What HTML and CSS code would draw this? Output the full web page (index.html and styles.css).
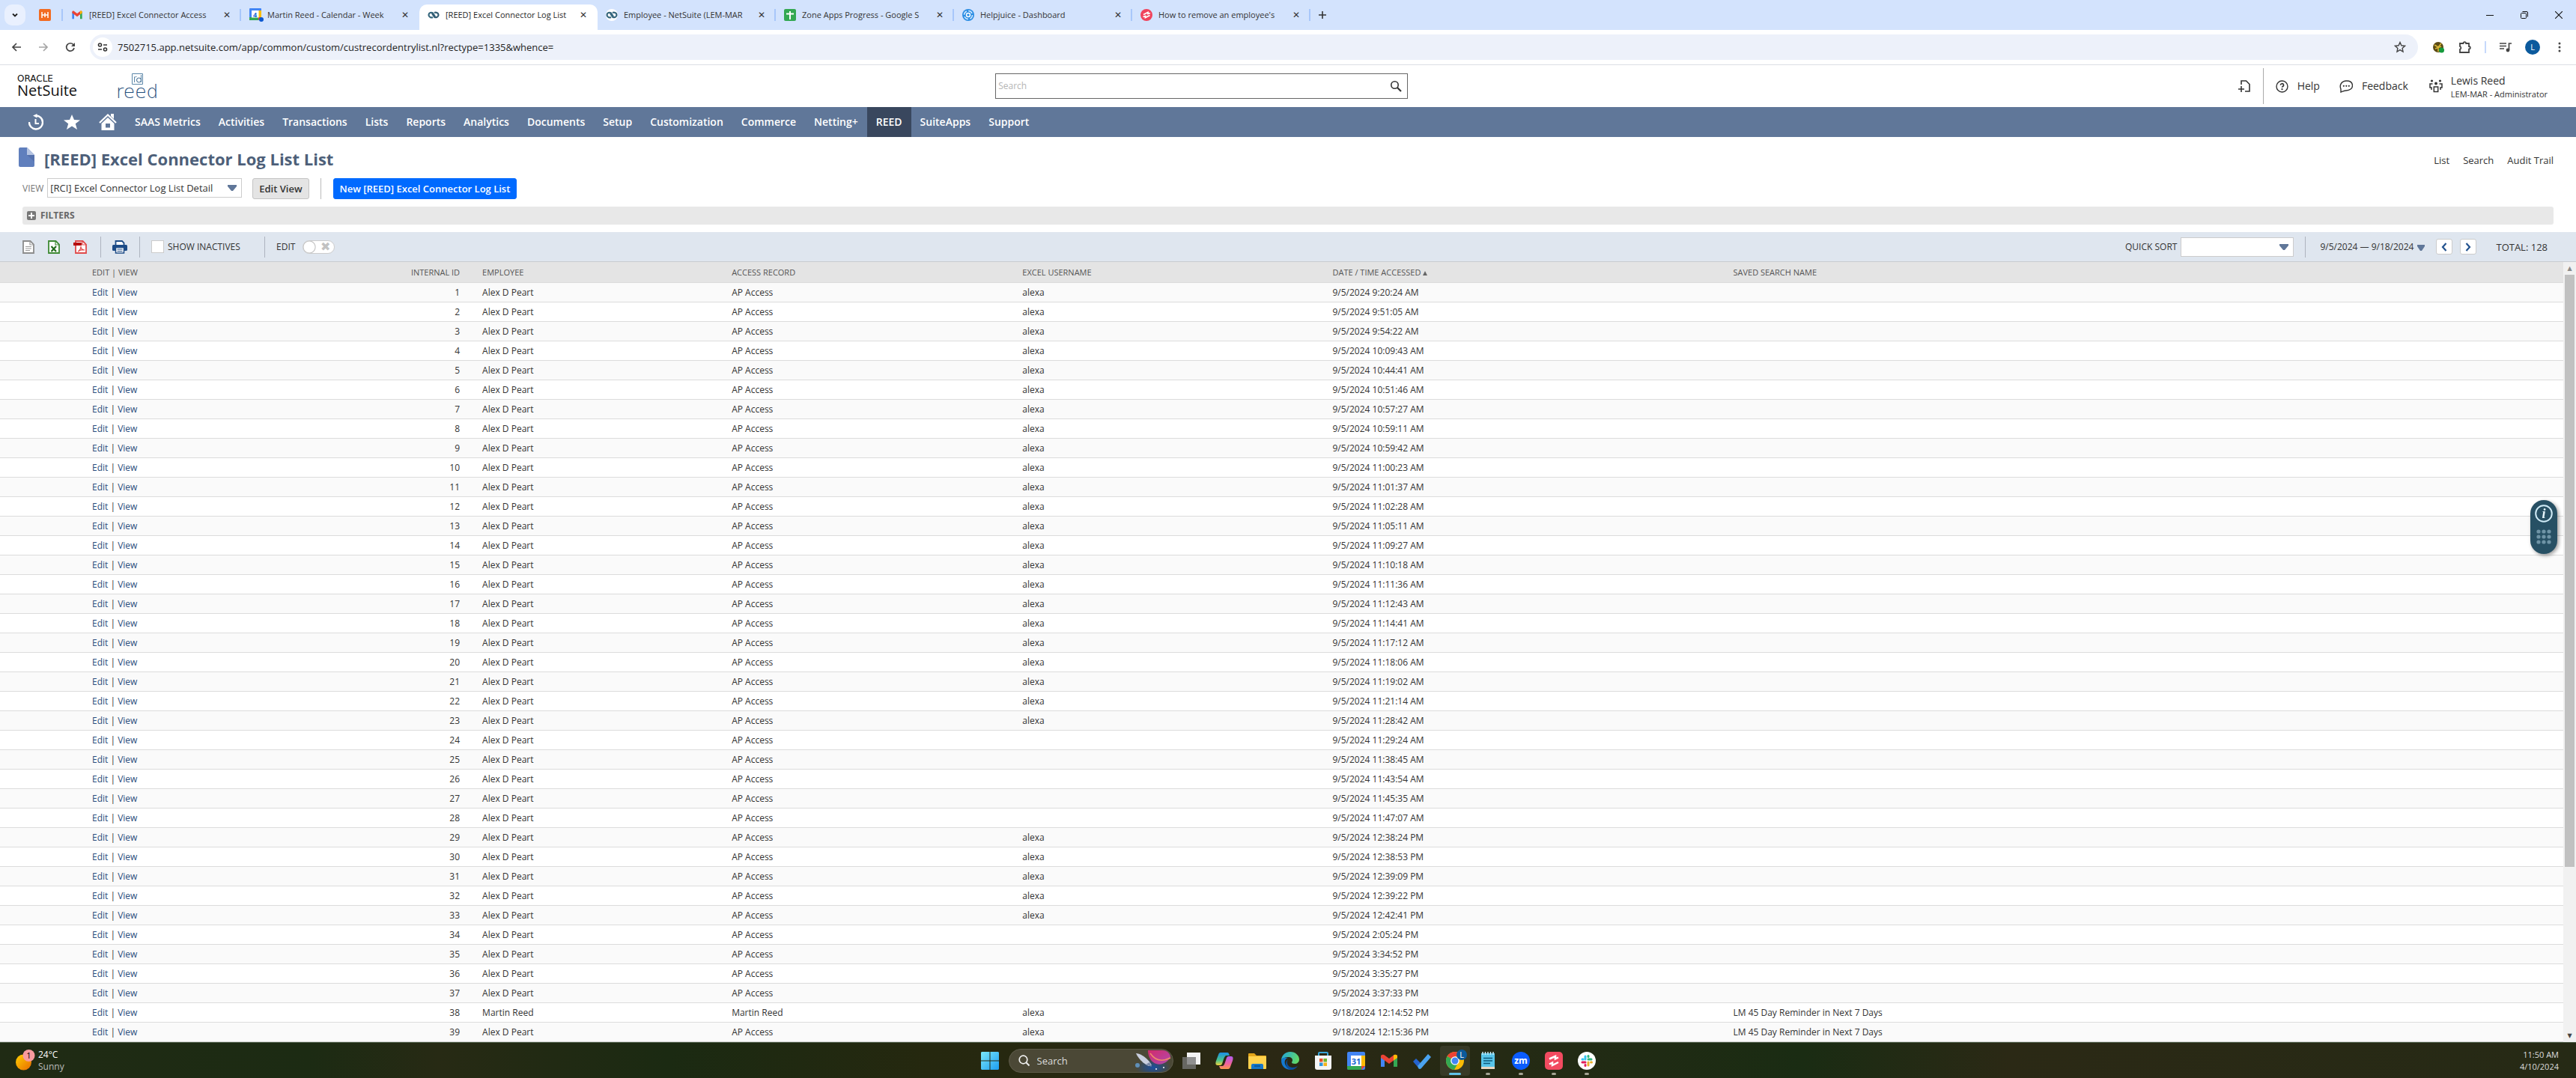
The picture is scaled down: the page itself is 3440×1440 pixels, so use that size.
FILE: index.html
```html
<!DOCTYPE html>
<html lang="en">
<head>
<meta charset="utf-8">
<title>[REED] Excel Connector Log List List</title>
<link rel="stylesheet" href="styles.css">
</head>
<body>

<div class="tabstrip">
  <button class="tab-search" aria-label="Search tabs"><svg width="10" height="10" viewBox="0 0 10 10"><path d="M2 3.500L5 6.500L8 3.500" fill="none" stroke="#1f1f1f" stroke-width="1.800"/></svg></button>
  <div class="tabs">
    <a href="#" class="tab pinned" aria-label="Pinned tab"><svg width="16" height="16" viewBox="0 0 16 16"><rect width="16" height="16" rx="2" fill="#f26b21"/><path d="M4 4v8M12 4v8M4 8h8M8 5v6" stroke="#fff" stroke-width="1.500"/></svg></a>
    <div class="tab"><svg width="16" height="16" viewBox="0 0 24 24"><path d="M2 20V6l4 3v11z" fill="#4285f4"/><path d="M18 20V9l4-3v14z" fill="#34a853"/><path d="M2 6c0-2 2-3 4-1.500L12 9l6-4.500C20 3 22 4 22 6v2l-10 7.500L2 8z" fill="#ea4335"/><path d="M18 4.500C20 3 22 4 22 6v2l-4 3z" fill="#fbbc04"/></svg><a href="#" class="tab-title">[REED] Excel Connector Access</a><button class="close" aria-label="Close tab">✕</button></div>
    <div class="tab"><svg width="20" height="18" viewBox="0 0 20 18"><rect width="16" height="16" rx="1" fill="#4285f4"/><path d="M0 12h12v4H0z" fill="#34a853"/><path d="M12 3h4v9h-4z" fill="#fbbc04"/><path d="M12 12h4l-4 4z" fill="#ea4335"/><rect x="3" y="3" width="9.500" height="9.500" fill="#fff"/><text x="5" y="11.500" class="cal-num">4</text><circle cx="16" cy="15" r="3" fill="#0b57d0"/></svg><a href="#" class="tab-title cal">Martin Reed - Calendar - Week</a><button class="close" aria-label="Close tab">✕</button></div>
    <div class="tab active"><svg width="16" height="16" viewBox="0 0 16 16"><g fill="none" stroke="#36677d" stroke-width="2.200"><path d="M7 11C5 12 1.500 11 1.500 8S5 4 7 5.500L10 10"/><path d="M9 5c2-1 5.500 0 5.500 3S11 12 9 10.500L6 6" stroke="#325c72"/></g></svg><a href="#" class="tab-title">[REED] Excel Connector Log List</a><button class="close" aria-label="Close tab">✕</button></div>
    <div class="tab after"><svg width="16" height="16" viewBox="0 0 16 16"><circle cx="8" cy="8" r="8" fill="#fff"/><g fill="none" stroke="#36677d" stroke-width="2.200"><path d="M7 11C5 12 1.500 11 1.500 8S5 4 7 5.500L10 10"/><path d="M9 5c2-1 5.500 0 5.500 3S11 12 9 10.500L6 6"/></g></svg><a href="#" class="tab-title">Employee - NetSuite (LEM-MAR</a><button class="close" aria-label="Close tab">✕</button></div>
    <div class="tab"><svg width="16" height="16" viewBox="0 0 16 16"><rect width="16" height="16" rx="2" fill="#34a853"/><path d="M8 3v11M3 6.500h10" stroke="#fff" stroke-width="2"/></svg><a href="#" class="tab-title">Zone Apps Progress - Google S</a><button class="close" aria-label="Close tab">✕</button></div>
    <div class="tab"><svg width="16" height="16" viewBox="0 0 16 16"><circle cx="8" cy="8" r="8" fill="#2b8de3"/><circle cx="8" cy="8" r="5.500" fill="none" stroke="#cfe8ff" stroke-width="1.500" stroke-dasharray="6 2.500"/><circle cx="8" cy="8" r="2.500" fill="none" stroke="#fff" stroke-width="1.500"/></svg><a href="#" class="tab-title">Helpjuice - Dashboard</a><button class="close" aria-label="Close tab">✕</button></div>
    <div class="tab last"><svg width="16" height="16" viewBox="0 0 16 16"><circle cx="8" cy="8" r="8" fill="#f0435c"/><path d="M4 7.500l6-3v2l3-1M3.500 10.500l3-1v2l6-3" fill="none" stroke="#fff" stroke-width="1.800"/></svg><a href="#" class="tab-title">How to remove an employee's</a><button class="close" aria-label="Close tab">✕</button></div>
  </div>
  <button class="new-tab" aria-label="New tab"><svg width="12" height="12" viewBox="0 0 12 12"><path d="M6 1v10M1 6h10" stroke="#333" stroke-width="1.600"/></svg></button>
  <div class="window-controls">
    <button aria-label="Minimize"><svg width="10" height="10" viewBox="0 0 10 10"><path d="M0 5.500h10" stroke="#111"/></svg></button>
    <button aria-label="Restore"><svg width="10" height="10" viewBox="0 0 10 10"><rect x=".5" y="2.500" width="7" height="7" rx="1" fill="none" stroke="#111"/><path d="M2.500 .5H8A1.500 1.500 0 0 1 9.500 2v5.500" fill="none" stroke="#111"/></svg></button>
    <button aria-label="Close window"><svg width="10" height="10" viewBox="0 0 10 10"><path d="M0 0l10 10M10 0L0 10" stroke="#111" stroke-width="1.100"/></svg></button>
  </div>
</div>

<div class="browser-bar">
  <div class="history">
    <button aria-label="Back"><svg width="14" height="14" viewBox="0 0 14 14"><path d="M13 7H2M7 2L2 7l5 5" fill="none" stroke="#444" stroke-width="1.700"/></svg></button>
    <button aria-label="Forward"><svg width="14" height="14" viewBox="0 0 14 14"><path d="M1 7h11M7 2l5 5-5 5" fill="none" stroke="#a5a5a5" stroke-width="1.700"/></svg></button>
    <button aria-label="Reload"><svg width="14" height="14" viewBox="0 0 14 14"><path d="M12 8A5.200 5.200 0 1 1 10.800 3.500L12.500 5" fill="none" stroke="#444" stroke-width="1.700"/><path d="M13 1v5H8z" fill="#444"/></svg></button>
  </div>
  <div class="omnibox">
    <span class="site-info"><svg width="14" height="12" viewBox="0 0 14 12" fill="none" stroke="#333" stroke-width="1.600"><circle cx="3.500" cy="3" r="2"/><path d="M8 3h5M1 9h5"/><circle cx="10.500" cy="9" r="2"/></svg></span>
    <input class="url" aria-label="Address" value="7502715.app.netsuite.com/app/common/custom/custrecordentrylist.nl?rectype=1335&amp;whence=">
    <button aria-label="Bookmark this page"><svg width="16" height="16" viewBox="0 0 16 16"><path d="M8 1.500l1.900 4.300 4.600.5-3.400 3.100.9 4.600L8 11.600 4 14l.9-4.600L1.500 6.300l4.600-.5z" fill="none" stroke="#444" stroke-width="1.400"/></svg></button>
  </div>
  <div class="extensions">
    <button class="ext" aria-label="Extension"><svg width="16" height="16" viewBox="0 0 16 16"><circle cx="7" cy="8" r="7" fill="#5b4a14"/><path d="M2 5l5 3 4-5M7 8v6M3 10l8-3" stroke="#d9b93a" stroke-width="1.500" fill="none"/><circle cx="11.500" cy="12" r="3.500" fill="#159a3c"/></svg></button>
    <button class="puzzle" aria-label="Extensions"><svg width="18" height="18" viewBox="0 0 18 18"><path d="M2 4h4.500a1.800 1.800 0 0 1 3.600 0H14v4a1.800 1.800 0 0 1 0 3.600V16H2v-4.200a2 2 0 0 0 0-3.800z" fill="none" stroke="#444" stroke-width="1.800"/></svg></button>
    <i class="rule"></i>
    <button class="media" aria-label="Media controls"><svg width="16" height="14" viewBox="0 0 16 14"><path d="M0 2h9M0 5.500h9M0 9h6M12.500 11V2H16" fill="none" stroke="#444" stroke-width="1.700"/><circle cx="11" cy="11" r="2.400" fill="#444"/></svg></button>
    <button class="avatar" aria-label="Profile">L</button>
    <button class="more" aria-label="Menu"><svg width="4" height="14" viewBox="0 0 4 14" fill="#444"><circle cx="2" cy="2" r="1.500"/><circle cx="2" cy="7" r="1.500"/><circle cx="2" cy="12" r="1.500"/></svg></button>
  </div>
</div>

<header class="app-header">
  <div class="logos">
    <a href="#" class="netsuite"><span class="oracle">ORACLE</span><span>NetSuite</span></a>
    <a href="#" class="reed"><svg width="15" height="15" viewBox="0 0 15 15"><path d="M.5 14.500V.5h14v14zM3.500 12V4.500M3.500 6.500c0-1.500 1-2 3-2M12.500 2v10" fill="none" stroke="#5b86a8"/><circle cx="9.500" cy="9" r="3" fill="none" stroke="#38678f"/></svg><span>reed</span></a>
  </div>
  <form class="global-search"><input type="text" placeholder="Search" aria-label="Search"><button type="button" aria-label="Search"><svg width="16" height="16" viewBox="0 0 16 16"><circle cx="6.500" cy="6.500" r="4.700" fill="none" stroke="#333" stroke-width="1.600"/><path d="M10 10l5 5" stroke="#333" stroke-width="2.200"/></svg></button></form>
  <div class="account">
    <button class="create" aria-label="Create new"><svg width="16" height="16" viewBox="0 0 16 16" fill="none" stroke="#333" stroke-width="1.600"><path d="M4 6V1h6.500L15 5.500V15H9M0 12h8M4 8v8"/></svg></button>
    <i class="rule"></i>
    <a href="#"><svg width="17" height="17" viewBox="0 0 17 17"><circle cx="8.500" cy="8.500" r="7.500" fill="none" stroke="#333" stroke-width="1.400"/><path d="M6.500 6.800a2 2 0 1 1 3 1.600c-.7.500-1 .7-1 1.400" fill="none" stroke="#333" stroke-width="1.700"/><circle cx="8.500" cy="12.200" r="1.100" fill="#333"/></svg>Help</a>
    <a href="#" class="feedback"><svg width="18" height="17" viewBox="0 0 18 17"><path d="M2 16v-4C-.5 6 3.500 1 9.500 1S17.500 4 17.500 7.500 14 14 9 14c-2 0-4 1-7 2z" fill="none" stroke="#333" stroke-width="1.400"/><g fill="#333"><circle cx="5.800" cy="7.800" r="1.100"/><circle cx="9.300" cy="7.800" r="1.100"/><circle cx="12.800" cy="7.800" r="1.100"/></g></svg>Feedback</a>
    <a href="#" class="role"><svg width="18" height="18" viewBox="0 0 18 18"><g fill="#333"><circle cx="3.500" cy="2" r="1.600"/><circle cx="14.500" cy="2" r="1.600"/><circle cx="9" cy="5.500" r="1.900"/></g><path d="M4.500 6H1v5h2v3M13.500 6H17v5h-2v3M6.300 10h5.400v6.500H6.300z" fill="none" stroke="#333" stroke-width="1.500"/></svg><span class="who"><span class="name">Lewis Reed</span><span class="org">LEM-MAR - Administrator</span></span></a>
  </div>
</header>

<nav class="main-nav">
  <a href="#" class="icon" aria-label="Recent records"><svg width="20" height="22" viewBox="0 0 20 22"><path d="M1 11a9 9 0 1 0 9-8.500" fill="none" stroke="#fff" stroke-width="2.400"/><path d="M6 2.500L11.500 0v5.500z" fill="#fff"/><path d="M9.500 7v6H14" fill="none" stroke="#fff" stroke-width="2"/></svg></a>
  <a href="#" class="icon" aria-label="Shortcuts"><svg width="22" height="20" viewBox="0 0 22 20"><path d="M11 0l3 7 8 .5-6.200 4.700L18 20l-7-4.500L4 20l2.200-7.800L0 7.500 8 7z" fill="#fff"/></svg></a>
  <a href="#" class="icon" aria-label="Home"><svg width="24" height="22" viewBox="0 0 24 22"><path d="M1 12L12 1.500 23 12" fill="none" stroke="#fff" stroke-width="2.200"/><path d="M16 0h4v7l-4-4z" fill="#fff"/><path d="M12 5l8.500 8v9h-17v-9z" fill="#fff"/><rect x="9" y="13" width="6" height="5.500" fill="#607799"/></svg></a>
  <a href="#">SAAS Metrics</a><a href="#">Activities</a><a href="#">Transactions</a><a href="#">Lists</a><a href="#">Reports</a><a href="#">Analytics</a><a href="#">Documents</a><a href="#">Setup</a><a href="#">Customization</a><a href="#">Commerce</a><a href="#">Netting+</a><a href="#" class="current">REED</a><a href="#">SuiteApps</a><a href="#">Support</a>
</nav>

<main class="page">
  <div class="title-row">
    <svg width="21" height="26" viewBox="0 0 21 26"><path d="M2 0h9l10 10v14a2 2 0 0 1-2 2H2a2 2 0 0 1-2-2V2a2 2 0 0 1 2-2z" fill="#607fbd"/><path d="M11 0l10 10H11z" fill="#b5c4e2"/><path d="M11 10h10v9z" fill="#5672ad"/></svg>
    <h1>[REED] Excel Connector Log List List</h1>
    <div class="page-links"><a href="#">List</a><a href="#">Search</a><a href="#">Audit Trail</a></div>
  </div>
  <div class="view-row">
    <label for="view">VIEW</label>
    <select id="view" class="view-select"><option>[RCI] Excel Connector Log List Detail</option></select>
    <button class="btn">Edit View</button>
    <i class="rule"></i>
    <button class="btn primary">New [REED] Excel Connector Log List</button>
  </div>
  <button class="filters"><svg width="12" height="12" viewBox="0 0 12 12"><rect width="12" height="12" rx="2" fill="#777"/><path d="M6 2v8M2 6h8" stroke="#fff" stroke-width="2"/></svg>FILTERS</button>

  <div class="list-bar">
    <div class="exports">
      <button aria-label="Export CSV"><svg width="16" height="18" viewBox="0 0 16 18"><path d="M1 1h9.500L15 5.500V17H1z" fill="#fff" stroke="#8c8c8c" stroke-width="1.800"/><path d="M10 1v5h5M4 8.500h8M4 11h8M4 13.500h6" fill="none" stroke="#9b9b9b" stroke-width="1.200"/></svg></button>
      <button aria-label="Export Excel"><svg width="16" height="18" viewBox="0 0 16 18"><path d="M1 1h9.500L15 5.500V17H1z" fill="#fff" stroke="#3e8a34" stroke-width="1.800"/><path d="M10 1v5h5" fill="none" stroke="#3e8a34" stroke-width="1.200"/><path d="M4.500 8l6.500 7M11 8l-6.500 7" stroke="#226b1c" stroke-width="2.200"/></svg></button>
      <button aria-label="Export PDF"><svg width="18" height="18" viewBox="0 0 18 18"><path d="M3 1h9.500L17 5.500V17H3z" fill="#fff" stroke="#e04a4a" stroke-width="1.800"/><path d="M12 1v5h5M6 15c3-2 4-5 4-7 0 3 2 5 5 5-3-1-6 0-9 2z" fill="none" stroke="#e04a4a" stroke-width="1.200"/><path d="M0 3h11v4H0z" fill="#b50d0d"/></svg></button>
    </div>
    <i class="rule"></i>
    <button class="print" aria-label="Print"><svg width="20" height="18" viewBox="0 0 20 18"><path d="M4.500 6V1h8.500l2.500 2.500V6" fill="#fff" stroke="#1c4b87" stroke-width="1.800"/><rect y="6" width="20" height="8" rx="1.500" fill="#1c4b87"/><path d="M4.500 9.500h11V17h-11z" fill="#fff" stroke="#1c4b87" stroke-width="1.500"/><path d="M6.500 12h7M6.500 14.500h7" stroke="#1c4b87"/></svg></button>
    <i class="rule"></i>
    <label class="inactives"><input type="checkbox">SHOW INACTIVES</label>
    <i class="rule"></i>
    <label class="inline-edit">EDIT<input type="checkbox" class="toggle" aria-label="Edit"></label>
    <div class="list-tools">
      <label for="sort">QUICK SORT</label>
      <select id="sort" class="sort-select"><option></option></select>
      <i class="rule"></i>
      <button class="range">9/5/2024 — 9/18/2024<svg width="10" height="8" viewBox="0 0 10 8"><path d="M0 0h10v2L6 8H4L0 2z" fill="#607799"/></svg></button>
      <button class="step" aria-label="Previous"><svg width="8" height="12" viewBox="0 0 8 12"><path d="M6.500 1L2 6l4.500 5" fill="none" stroke="#24538f" stroke-width="2.200"/></svg></button>
      <button class="step" aria-label="Next"><svg width="8" height="12" viewBox="0 0 8 12"><path d="M1.500 1L6 6l-4.500 5" fill="none" stroke="#24538f" stroke-width="2.200"/></svg></button>
      <span class="total">TOTAL: 128</span>
    </div>
  </div>

  <div class="list">
    <div class="list-body">
      <table>
        <thead><tr><th class="c-edit">EDIT | VIEW</th><th class="c-id">INTERNAL ID</th><th class="c-emp">EMPLOYEE</th><th class="c-rec">ACCESS RECORD</th><th class="c-user">EXCEL USERNAME</th><th class="c-date">DATE / TIME ACCESSED<svg width="6" height="6" viewBox="0 0 6 6"><path d="M3 0l3 6H0z" fill="#666"/></svg></th><th>SAVED SEARCH NAME</th></tr></thead>
        <tbody id="rows"></tbody>
      </table>
    </div>
    <div class="scrollbar"><span class="arrow">▲</span><span class="track"><span class="thumb"></span></span><span class="arrow down">▼</span></div>
  </div>
</main>

<div class="helper">
  <button aria-label="Information"><svg width="24" height="24" viewBox="0 0 24 24"><circle cx="12" cy="12" r="10.800" fill="none" stroke="#cfeaf6" stroke-width="2"/><text x="12" y="18" text-anchor="middle" class="info-i">i</text></svg></button>
  <button aria-label="Move"><svg width="20" height="20" viewBox="0 0 20 20" fill="#6f94a6"><circle cx="3" cy="3" r="2.600"/><circle cx="10" cy="3" r="2.600"/><circle cx="17" cy="3" r="2.600"/><circle cx="3" cy="10" r="2.600"/><circle cx="10" cy="10" r="2.600"/><circle cx="17" cy="10" r="2.600"/><circle cx="3" cy="17" r="2.600"/><circle cx="10" cy="17" r="2.600"/><circle cx="17" cy="17" r="2.600"/></svg></button>
</div>

<footer class="taskbar">
  <div class="weather"><svg width="28" height="30" viewBox="0 0 28 30"><defs><linearGradient id="sun" x1="0" y1="0" x2="1" y2="1"><stop offset="0" stop-color="#ffd000"/><stop offset="1" stop-color="#e86a00"/></linearGradient></defs><circle cx="10.500" cy="18" r="10.500" fill="url(#sun)"/><circle cx="17.500" cy="9" r="8" fill="#f79a9e"/><text x="17.500" y="13" text-anchor="middle" class="badge-num">1</text></svg><div>24°C<br><span class="dim">Sunny</span></div></div>
  <div class="apps">
    <button class="start" aria-label="Start"><svg width="24" height="24" viewBox="0 0 24 24"><defs><linearGradient id="win" x1="0" y1="0" x2="1" y2="1"><stop offset="0" stop-color="#7be8fb"/><stop offset="1" stop-color="#1c9cf0"/></linearGradient></defs><path d="M1 0h10.500v11.500H0V1zM12.500 0H23l1 1v10.500H12.500zM0 12.500h11.500V24H1l-1-1zM12.500 12.500H24V23l-1 1H12.500z" fill="url(#win)"/></svg></button>
    <label class="task-search"><svg width="16" height="16" viewBox="0 0 16 16"><circle cx="6.500" cy="6.500" r="5.300" fill="none" stroke="#eee" stroke-width="1.700"/><path d="M10.500 10.500l4 4" stroke="#eee" stroke-width="2"/></svg><input type="text" placeholder="Search" aria-label="Search"><svg width="52" height="32" viewBox="0 0 52 32"><defs><radialGradient id="space"><stop offset="0" stop-color="#1b4fa0"/><stop offset="1" stop-color="#1b4fa0" stop-opacity="0"/></radialGradient><linearGradient id="planet" x1="0" y1="0" x2="1" y2="1"><stop offset="0" stop-color="#d22a6a"/><stop offset="1" stop-color="#b04bb0"/></linearGradient></defs><ellipse cx="26" cy="25" rx="24" ry="12" fill="url(#space)"/><path d="M19 2h19c7 0 11 5 11 9-4 8-15 13-23 7-5-4-7-10-7-16z" fill="url(#planet)"/><path d="M22 6c6 9 15 12 27 6" fill="none" stroke="#f08a6a" stroke-width="1.500"/><path d="M3 6c5 0 16 6 21 16l-4 1C13 20 6 13 3 6z" fill="#c9cede"/><circle cx="5" cy="22" r="3" fill="#5f8fb8"/><path d="M16 21l5-3 3 6z" fill="#7c89a8"/><circle cx="30" cy="27" r="1" fill="#fff"/><circle cx="40" cy="25" r="1" fill="#fff"/></svg></label>
    <button aria-label="Task view"><svg width="24" height="24" viewBox="0 0 24 24"><rect x="6" y="1" width="18" height="16" fill="#f3f3f3"/><rect x="0" y="7" width="18" height="16" fill="#777" fill-opacity=".8"/></svg></button>
    <button aria-label="Copilot"><svg width="24" height="24" viewBox="0 0 24 24"><defs><linearGradient id="co1" x1="0" y1="0" x2="0" y2="1"><stop offset="0" stop-color="#1a8fe8"/><stop offset=".6" stop-color="#49c38b"/><stop offset="1" stop-color="#f2d13c"/></linearGradient><linearGradient id="co2" x1="0" y1="0" x2="0" y2="1"><stop offset="0" stop-color="#b35bf0"/><stop offset=".6" stop-color="#f0639a"/><stop offset="1" stop-color="#f7984a"/></linearGradient></defs><path d="M7 1h9c2 0 2 2 3 4h-4c-2 0-3 2-4 5l-2 6c-1 2-2 2-4 2H3c-3 0-3-3-2-6L4 4c.500-2 1.500-3 3-3z" fill="url(#co1)"/><path d="M17 23H8c-2 0-2-2-3-4h4c2 0 3-2 4-5l2-6c1-2 2-2 4-2h2c3 0 3 3 2 6l-3 8c-.500 2-1.500 3-3 3z" fill="url(#co2)"/></svg></button>
    <button aria-label="File Explorer"><svg width="24" height="24" viewBox="0 0 24 24"><path d="M0 3q0-1 1-1h7l3 3h12q1 0 1 1v6H0z" fill="#e2a51a"/><rect y="6" width="24" height="17" rx="1" fill="#ffd24d"/><path d="M4 23v-5q0-2 2-2h12q2 0 2 2v5z" fill="#1777c9"/><path d="M8 19h8" stroke="#0b4f8c" stroke-width="1.500"/></svg></button>
    <button aria-label="Edge"><svg width="24" height="24" viewBox="0 0 24 24"><defs><linearGradient id="ed" x1="0" y1="0" x2="1" y2=".3"><stop offset="0" stop-color="#1ea4e0"/><stop offset="1" stop-color="#5fd66b"/></linearGradient></defs><path d="M0 12C0 5 5 0 12 0s12 5 12 10c0 4-3 6-6 6s-4-1-4-2 1-1 1-3-2-4-5-4C5 7 0 9 0 12z" fill="url(#ed)"/><path d="M0 12c0-4 5-5 9-4-4 1-5 5-4 8 1 4 5 7 9 7.500C6 25 0 19 0 12z" fill="#1479cf"/><path d="M9 10c-3 5 0 11 6 11 3 0 5-1 7-2-3 5-8 5.500-11 4.500-5-2-7-9-2-13.500z" fill="#0c4f9c"/></svg></button>
    <button aria-label="Store"><svg width="24" height="24" viewBox="0 0 24 24"><path d="M6 6V2q0-1 1-1h10q1 0 1 1v4" fill="none" stroke="#3aa5d8" stroke-width="2"/><path d="M1 5h22v16q0 3-3 3H4q-3 0-3-3z" fill="#f5f5f5"/><path d="M7 9h4.500v4.500H7z" fill="#e8502a"/><path d="M12.500 9H17v4.500h-4.500z" fill="#6fb52c"/><path d="M7 14.500h4.500V19H7z" fill="#2f96dd"/><path d="M12.500 14.500H17V19h-4.500z" fill="#f4b31a"/></svg></button>
    <button aria-label="Calendar"><svg width="24" height="24" viewBox="0 0 24 24"><rect width="24" height="24" rx="2" fill="#4285f4"/><path d="M0 19h19v5H2q-2 0-2-2z" fill="#34a853"/><path d="M19 5h5v14h-5z" fill="#fbbc04"/><path d="M19 19h5l-5 5z" fill="#ea4335"/><path d="M5 5h14v14H5z" fill="#fff"/><text x="12" y="17" text-anchor="middle" class="cal-day">31</text></svg></button>
    <button aria-label="Gmail"><svg width="24" height="24" viewBox="0 0 24 24"><path d="M1 20V6l5 3v11z" fill="#4285f4"/><path d="M18 20V9l5-3v14z" fill="#34a853"/><path d="M1 6c0-2 3-3 5-1.500L12 9l6-4.500C20 3 23 4 23 6v2l-11 8L1 8z" fill="#ea4335"/><path d="M18 4.500C20 3 23 4 23 6v2l-5 3.500z" fill="#fbbc04"/></svg></button>
    <button aria-label="To Do"><svg width="24" height="24" viewBox="0 0 24 24"><path d="M0 13l4-4 6 6-4 5z" fill="#2564cf"/><path d="M6 19L20 3l4 4-13 15q-2 2-4 0z" fill="#4aa3f0"/></svg></button>
    <button class="focused" aria-label="Chrome"><svg width="32" height="32" viewBox="0 0 32 32"><circle cx="16" cy="16" r="12" fill="#fbbc04"/><path d="M16 16L5.600 10A12 12 0 0 1 26.400 10H16z" fill="#ea4335"/><path d="M16 16L5.600 10A12 12 0 0 0 15 28l5-9z" fill="#34a853"/><circle cx="16" cy="16" r="5.800" fill="#fff"/><circle cx="16" cy="16" r="4.500" fill="#4285f4"/><circle cx="25" cy="8" r="7" fill="#0b5a9d"/><text x="25" y="12" text-anchor="middle" class="chrome-l">L</text></svg></button>
    <button class="running" aria-label="Notepad"><svg width="24" height="24" viewBox="0 0 24 24"><path d="M3 2h18v21H3z" fill="#58c4e8"/><path d="M3 20h18v3H3z" fill="#e8d6c0"/><path d="M5 0v4M8.500 0v4M12 0v4M15.500 0v4M19 0v4" stroke="#c7ecf8" stroke-width="1.500"/><path d="M6 8.500h12M6 12h12M6 15.500h9" stroke="#0d5878" stroke-width="1.500"/></svg></button>
    <button class="running" aria-label="Zoom"><svg width="24" height="24" viewBox="0 0 24 24"><circle cx="12" cy="12" r="12" fill="#0b5cff"/><text x="12" y="16" text-anchor="middle" class="zm">zm</text></svg></button>
    <button class="running" aria-label="Scribe"><svg width="24" height="24" viewBox="0 0 24 24"><rect width="24" height="24" rx="5" fill="#f24b60"/><path d="M6 9.500l8-3.500v3.500l4-2M6 16.500l4-2V18l8-4" fill="none" stroke="#fff" stroke-width="2.500"/></svg></button>
    <button class="running" aria-label="Slack"><svg width="24" height="24" viewBox="0 0 24 24"><circle cx="12" cy="12" r="12" fill="#fff"/><g stroke-width="3" stroke-linecap="round"><path d="M10 6v4M6 10h1" stroke="#36c5f0"/><path d="M14 10h4M14 5.500v1" stroke="#2eb67d"/><path d="M14 14v4M17.500 14h1" stroke="#ecb22e"/><path d="M6 14h4M10 17.500v1" stroke="#e01e5a"/></g></svg></button>
  </div>
  <div class="clock">11:50 AM<br>4/10/2024</div>
</footer>

<script src="rows.js"></script>
</body>
</html>
```
FILE: styles.css
```css
* { box-sizing: border-box; }
body {
  margin: 0;
  height: 100vh;
  display: flex;
  flex-direction: column;
  overflow: hidden;
  background: #fff;
  color: #333;
  font: 12px/16px "Open Sans", "Noto Sans", sans-serif;
}
a { color: inherit; text-decoration: none; }
button { border: 0; padding: 0; background: none; color: inherit; font: inherit; display: flex; align-items: center; justify-content: center; }
input, select { font: inherit; color: inherit; }
svg { display: block; flex: none; }
label { white-space: nowrap; }

/* Browser tabs */
.tabstrip { flex: none; display: flex; align-items: center; height: 40px; padding-left: 6px; background: #d3e3fd; font-size: 11px; }
.tab-search { width: 28px; height: 28px; border-radius: 10px; background: #e9f0fe; }
.tabs { display: flex; align-self: stretch; }
.tab { display: flex; align-items: center; width: 238px; margin-top: 6px; padding: 0 13px 6px 11px; position: relative; }
.tab::after { content: ""; position: absolute; right: 0; top: 6px; width: 2px; height: 16px; background: #a8c7fa; }
.tab.pinned { width: 50px; padding: 0 0 6px 18px; }
.tab.active { background: #fff; border-radius: 10px 10px 0 0; color: #1f1f1f; }
.tab.active::after, .tab:has(+ .active)::after { display: none; }
.tab-title { flex: 1; margin-left: 8px; white-space: nowrap; }
.tab-title.cal { margin-left: 4px; }
.close { width: 12px; margin-left: 8px; font: 12px "DejaVu Sans", sans-serif; color: #333; }
.cal-num { font: bold 9px "Open Sans", sans-serif; fill: #1967d2; }
.new-tab { width: 32px; }
.window-controls { display: flex; margin-left: auto; }
.window-controls button { width: 46px; height: 40px; }

.browser-bar { flex: none; display: flex; align-items: center; height: 47px; border-bottom: 1px solid #dcdfe4; padding-left: 15px; }
.history { display: flex; gap: 22px; width: 105px; }
.omnibox { flex: 1; display: flex; align-items: center; height: 34px; padding: 0 8px 0 4px; border-radius: 17px; background: #edf1fa; }
.site-info { width: 26px; height: 26px; border-radius: 13px; background: #fff; display: flex; align-items: center; justify-content: center; }
.url { flex: 1; border: 0; padding: 0; margin-left: 7px; background: none; font-size: 13px; color: #1f1f1f; }
.omnibox button { width: 32px; }
.extensions { display: flex; align-items: center; width: 211px; padding-left: 20px; }
.puzzle { margin-left: 18px; }
.extensions .rule { width: 2px; height: 16px; margin: 0 18px 0 17px; background: #c6d9fb; }
.avatar { width: 20px; height: 20px; margin: 0 24px 0 18px; border-radius: 10px; background: #0b5a9d; color: #fff; font-size: 11px; }

/* Application header */
.app-header { flex: none; display: flex; align-items: center; height: 56px; }
.logos { width: 38.64%; display: flex; align-items: center; padding-left: 23px; gap: 52px; }
.netsuite { display: flex; flex-direction: column; color: #111; font-size: 20px; line-height: 21px; }
.oracle { font: 12px/10px "DejaVu Sans", sans-serif; }
.reed { display: flex; flex-direction: column; align-items: center; color: #1f4d7a; font: 200 25px/20px "DejaVu Sans", "DejaVu Sans Light", sans-serif; }
.global-search { width: 16%; height: 34px; display: flex; border: 1px solid #666; }
.global-search input { flex: 1; border: 0; padding: 0 3px; background: none; }
.global-search input::placeholder { color: #b5b5b5; }
.global-search button { width: 30px; }
.account { margin-left: auto; display: flex; align-items: center; padding-right: 38px; font-size: 14px; font-weight: 500; }
.account .rule { width: 1px; height: 48px; margin: 0 16px 0 17px; background: #aaa; }
.account a { display: flex; align-items: center; gap: 12px; }
.account .feedback { margin-left: 26px; }
.account .role { margin-left: 28px; gap: 11px; }
.who { display: flex; flex-direction: column; }
.name { line-height: 20px; }
.org { font-size: 11px; font-weight: 400; line-height: 15px; }

.main-nav { flex: none; display: flex; align-items: stretch; height: 40px; padding-left: 24px; background: #607799; color: #fff; font-size: 14px; font-weight: 600; }
.main-nav a { display: flex; align-items: center; padding: 0 12px; }
.main-nav .icon { width: 48px; padding: 0; justify-content: center; }
.main-nav .current { background: #39475e; }

/* Record list */
.page { flex: 1; min-height: 0; display: flex; flex-direction: column; }
.title-row { display: flex; align-items: center; height: 52px; padding: 2px 30px 0 25px; }
.title-row h1 { margin: 0; padding: 4px 0 0 13px; font-size: 22px; line-height: 30px; font-weight: 700; color: #4d5f79; }
.page-links { margin-left: auto; display: flex; gap: 18px; padding-top: 8px; font-size: 13px; font-weight: 500; }
.view-row { display: flex; align-items: flex-start; height: 41px; padding: 3px 30px 0; }
.view-row label { color: #777; line-height: 28px; }
select { appearance: none; border: 1px solid #ccc; border-radius: 0; background: #fff url("data:image/svg+xml,%3Csvg xmlns='http://www.w3.org/2000/svg' width='12' height='8'%3E%3Cpath d='M0 0h12v2L7 8H5L0 2z' fill='%23607799'/%3E%3C/svg%3E") no-repeat right 6px center; }
.view-select { width: 260px; height: 26px; margin: 0 14px 0 5px; padding: 0 3px; font-size: 13px; }
.btn { height: 28px; padding: 0 8px; border: 1px solid #c4c4c4; border-radius: 3px; background: #e4e4e4; font-size: 13px; font-weight: 600; }
.btn.primary { border-color: #006aff; background: #006aff; color: #fff; }
.view-row .rule { width: 1px; height: 28px; margin: 0 16px 0 15px; background: #bbb; }
.filters { height: 24px; margin: 0 30px; padding: 0 6px; gap: 6px; justify-content: flex-start; border-radius: 3px; background: #e8e8e8; color: #666; font-weight: 700; }

.list-bar { display: flex; align-items: center; flex: none; height: 40px; margin-top: 10px; padding: 0 38px 0 30px; background: #dfe6ef; border-bottom: 1px solid #c8cbd0; }
.list-bar .rule { width: 1px; height: 28px; background: #aeb4bf; }
.exports { display: flex; gap: 18px; width: 104px; }
.print { margin: 0 16px 0 15px; }
.inactives { display: flex; align-items: center; gap: 5px; width: 166px; padding-left: 15px; }
.inactives input { appearance: none; width: 17px; height: 17px; margin: 0; border: 1px solid #ccc; background: #fff; }
.inline-edit { display: flex; align-items: center; gap: 10px; padding-left: 15px; }
.toggle { appearance: none; width: 43px; height: 18px; margin: 0; border: 1px solid #ccc; border-radius: 9px; background: radial-gradient(circle at 8px 8px, #fff 7px, #bbb 8px, transparent 9px), #fff; display: flex; align-items: center; justify-content: flex-end; padding-right: 5px; }
.toggle::before { content: "✖"; color: #c2c2c2; font: 16px "DejaVu Sans", sans-serif; }
.list-tools { margin-left: auto; display: flex; align-items: center; }
.sort-select { width: 151px; height: 26px; margin: 0 15px 0 5px; }
.range { margin: 0 15px 0 19px; gap: 5px; }
.range svg { margin-top: 3px; }
.step { width: 22px; height: 21px; margin-right: 10px; border: 1px solid #ccc; border-radius: 3px; background: #fff; }
.total { margin-left: 16px; font-size: 13px; }

.list { flex: 1; min-height: 0; display: flex; }
.list-body { flex: 1; overflow: hidden; }
table { width: 100%; table-layout: fixed; border-collapse: separate; border-spacing: 0; }
th, td { height: 26px; padding: 0 16px; text-align: left; white-space: nowrap; border-bottom: 1px solid #dcdcdc; }
th { height: 28px; background: #e4e4e4; color: #555; font-size: 11px; font-weight: 400; }
th svg { display: inline-block; margin-left: 3px; }
tbody tr:nth-child(odd) { background: #fafafa; }
.c-edit { width: 13.15%; padding-left: 123px; }
.c-id { width: 5.2%; padding-right: 14px; text-align: right; }
.c-emp { width: 9.73%; }
.c-rec { width: 11.34%; }
.c-user { width: 12.1%; }
.c-date { width: 15.63%; }
td a { color: #2a4d7c; }

.scrollbar { width: 17px; display: flex; flex-direction: column; background: #f1f1f1; }
.arrow { height: 17px; text-align: center; font: 8px/17px "DejaVu Sans", sans-serif; color: #8a8a8a; }
.arrow.down { color: #444; }
.track { flex: 1; padding: 0 2px; }
.thumb { display: block; height: 78.5%; background: #c1c1c1; }

.helper { position: fixed; right: 25px; top: 668px; width: 36px; height: 72px; border-radius: 18px; background: #275064; box-shadow: 2px 2px 5px #0006; display: flex; flex-direction: column; align-items: center; gap: 9px; padding-top: 6px; }
.info-i { font: italic bold 18px "Liberation Serif", serif; fill: #e5f5fb; }

/* Taskbar */
.taskbar { flex: none; display: grid; grid-template-columns: 1fr auto 1fr; align-items: center; height: 48px; background: linear-gradient(90deg, #202b14, #1c2b13 12%, #272a14 17%, #1b2a12 26%, #25280f 36%, #2b2814 50%, #252a14 58%, #1a2c13 70%, #2b2915 78%, #262a15); border-top: 1px solid #4a5a44; color: #fff; }
.weather { display: flex; gap: 2px; padding-left: 21px; }
.dim { color: #bbb; }
.badge-num { font: 11px "Open Sans", sans-serif; }
.apps { display: flex; align-items: center; gap: 20px; }
.apps button { width: 24px; height: 40px; position: relative; }
.apps .start { margin-right: -7px; }
.task-search { display: flex; align-items: center; width: 220px; height: 32px; margin-right: -8px; padding: 0 0 0 12px; border-radius: 16px; overflow: hidden; background: #4b4836; border: 1px solid #5e5b4a; }
.task-search input { flex: 1; width: 0; border: 0; padding: 0 0 0 9px; background: none; font-size: 13px; }
.task-search input::placeholder { color: #ddd; }
.apps .focused { width: 40px; margin: 0 -8px; border-radius: 4px; background: #ffffff14; }
.focused::after, .running::after { content: ""; position: absolute; bottom: 1px; width: 6px; height: 3px; border-radius: 2px; background: #a5a594; }
.focused::after { width: 16px; background: #5fc3ea; }
.cal-day { font: bold 11px "Open Sans", sans-serif; fill: #1967d2; }
.chrome-l { font: 11px "Open Sans", sans-serif; fill: #fff; }
.zm { font: bold 12px "Open Sans", sans-serif; fill: #fff; }
.clock { text-align: right; padding-right: 23px; color: #ddd; font-size: 11px; }
```
FILE: rows.js
```js
// Date and time of each logged access, in internal ID order.
const accessed = [
  '9/5/2024 9:20:24 AM', '9/5/2024 9:51:05 AM', '9/5/2024 9:54:22 AM', '9/5/2024 10:09:43 AM',
  '9/5/2024 10:44:41 AM', '9/5/2024 10:51:46 AM', '9/5/2024 10:57:27 AM', '9/5/2024 10:59:11 AM',
  '9/5/2024 10:59:42 AM', '9/5/2024 11:00:23 AM', '9/5/2024 11:01:37 AM', '9/5/2024 11:02:28 AM',
  '9/5/2024 11:05:11 AM', '9/5/2024 11:09:27 AM', '9/5/2024 11:10:18 AM', '9/5/2024 11:11:36 AM',
  '9/5/2024 11:12:43 AM', '9/5/2024 11:14:41 AM', '9/5/2024 11:17:12 AM', '9/5/2024 11:18:06 AM',
  '9/5/2024 11:19:02 AM', '9/5/2024 11:21:14 AM', '9/5/2024 11:28:42 AM', '9/5/2024 11:29:24 AM',
  '9/5/2024 11:38:45 AM', '9/5/2024 11:43:54 AM', '9/5/2024 11:45:35 AM', '9/5/2024 11:47:07 AM',
  '9/5/2024 12:38:24 PM', '9/5/2024 12:38:53 PM', '9/5/2024 12:39:09 PM', '9/5/2024 12:39:22 PM',
  '9/5/2024 12:42:41 PM', '9/5/2024 2:05:24 PM', '9/5/2024 3:34:52 PM', '9/5/2024 3:35:27 PM',
  '9/5/2024 3:37:33 PM', '9/18/2024 12:14:52 PM', '9/18/2024 12:15:36 PM'
];

// Entries logged without an Excel username.
const anonymous = id => (id >= 24 && id <= 28) || (id >= 34 && id <= 37);

document.getElementById('rows').innerHTML = accessed.map((time, i) => {
  const id = i + 1;
  const employee = id === 38 ? 'Martin Reed' : 'Alex D Peart';
  const record = id === 38 ? 'Martin Reed' : 'AP Access';
  const search = id >= 38 ? 'LM 45 Day Reminder in Next 7 Days' : '';
  return `<tr><td class="c-edit"><a href="#">Edit</a> | <a href="#">View</a></td><td class="c-id">${id}</td>` +
    `<td>${employee}</td><td>${record}</td><td>${anonymous(id) ? '' : 'alexa'}</td><td>${time}</td><td>${search}</td></tr>`;
}).join('');
```
